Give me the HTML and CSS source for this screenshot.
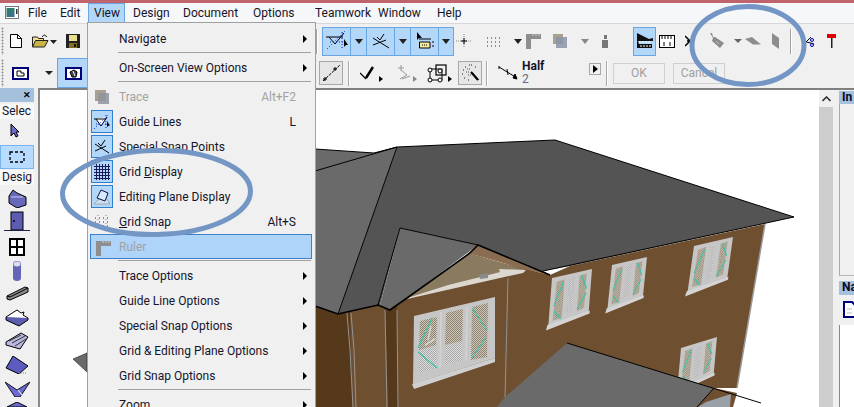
FILE: index.html
```html
<!DOCTYPE html>
<html lang="en">
<head>
<meta charset="utf-8">
<title>ArchiCAD View menu</title>
<link rel="stylesheet" href="styles.css">
</head>
<body>
<div class="app">
  <div class="titlebar"></div>
  <nav class="menubar">
    <svg class="appicon" width="15" height="14" viewBox="0 0 15 14"><rect x="0.5" y="0.5" width="13" height="12" fill="#fff" stroke="#777"/><rect x="1.5" y="2" width="8" height="9" fill="#2f7d6e"/><rect x="4" y="6" width="5" height="5" fill="#456a9c"/><rect x="11" y="3" width="1.5" height="5" fill="#333"/></svg>
    <span class="mi mi-file">File</span>
    <span class="mi mi-edit">Edit</span>
    <span class="mi mi-view">View</span>
    <span class="mi mi-design">Design</span>
    <span class="mi mi-doc">Document</span>
    <span class="mi mi-opt">Options</span>
    <span class="mi mi-team">Teamwork</span>
    <span class="mi mi-win">Window</span>
    <span class="mi mi-help">Help</span>
  </nav>

  <div class="toolbars">
    <div class="tbrow tbrow1">
      <div class="tbleft">
        <i class="grip"></i>
        <svg class="ic a-page" width="12" height="14" viewBox="0 0 12 14"><path d="M.5.5h7l4 4v9H.5z" fill="#fff" stroke="#000"/><path d="M7.5.5v4h4" fill="none" stroke="#000"/></svg>
        <svg class="ic a-open" width="17" height="14" viewBox="0 0 17 14"><path d="M.5 13V3h5l1 1.5h5V7" fill="#f4e08a" stroke="#222"/><path d="M.5 13 3.500 6.500H16L12.500 13z" fill="#c9b445" stroke="#222"/><path d="M10 3 12 .8l3 2" fill="none" stroke="#222"/></svg>
        <svg class="ic a-arrow1" width="7" height="4" viewBox="0 0 7 4"><path d="M0 0h7L3.500 4z" fill="#222"/></svg>
        <svg class="ic a-save" width="14" height="14" viewBox="0 0 14 14"><path d="M0 0h14v14H0z" fill="#222"/><path d="M3 1h8v6H3z" fill="#e8e090"/><path d="M3 9h8v5H3z" fill="#807020"/><path d="M8 10h2v3H8z" fill="#111"/></svg>
      </div>
      <i class="vsep"></i>
      <div class="bluegroup">
        <span class="bcell w28"><svg width="24" height="22" viewBox="0 0 24 22"><path d="M1 7h17M4 7l6 7 9-11" fill="none" stroke="#000"/><path d="M2 19 20 1M17 2v16M5 12h14" stroke="#0022cc" stroke-dasharray="1 2" fill="none"/><path d="M19 9v8l2-2 2 0z" fill="#000"/></svg></span>
        <span class="bcell w16"><i class="tri"></i></span>
        <span class="bcell w28"><svg width="18" height="16" viewBox="0 0 18 16"><path d="M1 5 17 15M1 12 14 7M5 4l3 3 4-6" fill="none" stroke="#000"/></svg></span>
        <span class="bcell w16"><i class="tri"></i></span>
        <span class="bcell w28"><svg width="18" height="18" viewBox="0 0 18 18"><path d="M1 0v8l2-2 3 0z" fill="#000"/><path d="M3.500 10H14v6H3.500z" fill="#f6e9a0" stroke="#000"/><path d="M6 13h6" stroke="#000" stroke-dasharray="1 1"/><path d="M3 7h12M16 10h2M16 14h2" stroke="#000"/></svg></span>
        <span class="bcell w15"><i class="tri"></i></span>
      </div>
      <svg class="ic a-guide" width="16" height="14" viewBox="0 0 16 14"><path d="M8 0v14M0 7h16" stroke="#888" stroke-dasharray="1 1"/><path d="M5 7h6M8 4v6" stroke="#000"/></svg>
      <svg class="ic a-grid" width="15" height="13" viewBox="0 0 15 13"><path d="M0 3h15M0 7h15M0 11h15" stroke="#0022aa" stroke-dasharray="1 3"/></svg>
      <svg class="ic a-arrow2" width="8" height="5" viewBox="0 0 8 5"><path d="M0 0h8L4 5z" fill="#222"/></svg>
      <svg class="ic a-ruler" width="15" height="15" viewBox="0 0 15 15"><path d="M0 0h15v5H5v10H0z" fill="#8e8e8e"/><path d="M7 0v2M10 0v2M13 0v2" stroke="#ccc"/></svg>
      <svg class="ic a-layers" width="14" height="14" viewBox="0 0 14 14"><rect x="0" y="0" width="10" height="10" fill="#a8a090"/><rect x="3" y="3" width="11" height="11" fill="#8a94a8" opacity=".85"/></svg>
      <svg class="ic a-arrow3" width="8" height="5" viewBox="0 0 8 5"><path d="M0 0h8L4 5z" fill="#888"/></svg>
      <svg class="ic a-fig" width="8" height="13" viewBox="0 0 8 13"><path d="M2 5h5v8H1V5zM3 0h3v4H3z" fill="#777"/></svg>
      <span class="bcell w23 a-sel"><svg width="20" height="20" viewBox="0 0 20 20"><path d="M2 2 14 8 18 7v3H3l1 3h13v4H2z" fill="#111"/><path d="M5 15h12M4 11h12" stroke="#fff" stroke-dasharray="2 1"/></svg></span>
      <svg class="ic a-rule2" width="16" height="13" viewBox="0 0 16 13"><rect x=".5" y=".5" width="15" height="12" fill="#fff" stroke="#000"/><path d="M3 1v3M6 1v3M9 1v3M12 1v3M5 7v4M11 7v4" stroke="#000"/></svg>
      <svg class="ic a-sc1" width="8" height="12" viewBox="0 0 8 12"><path d="M0 1 5 6 0 11M2 6h6" fill="none" stroke="#000" stroke-width="1.500"/></svg>
      <svg class="ic a-g1" width="16" height="16" viewBox="0 0 16 16"><path d="M1 0 3 0 4 4 6 4 15 10 11 15 3 8 4 5z" fill="#8b8b8b"/><path d="M7 8l3 3" stroke="#c4c4c4"/></svg>
      <svg class="ic a-arrow4" width="8" height="4" viewBox="0 0 8 4"><path d="M0 0h8L4 4z" fill="#666"/></svg>
      <svg class="ic a-g2" width="16" height="8" viewBox="0 0 16 8"><path d="M7 0 16 7.500H8L0 2z" fill="#8d8d8d"/></svg>
      <svg class="ic a-g3" width="8" height="16" viewBox="0 0 8 16"><path d="M0 0 7 5v11L0 11z" fill="#8d8d8d"/></svg>
      <i class="vsep a-sep2"></i>
      <svg class="ic a-sc2" width="13" height="14" viewBox="0 0 13 14"><path d="M0 2h3M0 4h3" stroke="#d00"/><path d="M1 7 12 10M1 11 9 3" stroke="#000"/><circle cx="10" cy="6" r="1.500" fill="none" stroke="#00a"/><circle cx="10" cy="11" r="1.500" fill="none" stroke="#00a"/></svg>
      <svg class="ic a-ham" width="9" height="14" viewBox="0 0 9 14"><path d="M0 0h9v4H0z" fill="#d00"/><path d="M4 4h1.500v10H4z" fill="#222"/></svg>
    </div>
    <div class="tbrow tbrow2">
      <div class="tbleft">
        <i class="grip"></i>
        <svg class="ic b-frame" width="17" height="13" viewBox="0 0 17 13"><rect x="1" y="1" width="15" height="11" fill="#fff" stroke="#00007a" stroke-width="2"/><path d="M5 4h4v2h3v3H5z" fill="none" stroke="#000"/></svg>
        <svg class="ic b-arrow" width="8" height="4" viewBox="0 0 8 4"><path d="M0 0h8L4 4z" fill="#222"/></svg>
        <span class="bcell b-sel"><svg width="17" height="13" viewBox="0 0 17 13"><rect x="1" y="1" width="15" height="11" fill="#fff" stroke="#00007a" stroke-width="2"/><path d="M5 5 9 3 12 5 11 10 7 10z" fill="#445" stroke="#000"/><path d="M8 4 10 9" stroke="#fff"/></svg></span>
      </div>
      <span class="pbtn c-line"><svg width="19" height="18" viewBox="0 0 19 18"><path d="M1 17 18 1" stroke="#000" stroke-dasharray="3 1"/><path d="M3 13v4M1 15h4M13 3v4M11 5h4" stroke="#000"/></svg></span>
      <i class="vsep2 c-s1"></i>
      <svg class="ic c-i1" width="14" height="14" viewBox="0 0 14 14"><path d="M0 7 6 13" stroke="#000" stroke-width="1.200"/><path d="M6 12 13 1" stroke="#000" stroke-width="2.500"/></svg>
      <svg class="ic c-t1" width="4" height="6" viewBox="0 0 4 6"><path d="M0 0 4 3 0 6z" fill="#000"/></svg>
      <svg class="ic c-i2" width="13" height="16" viewBox="0 0 13 16"><path d="M3 0v6M0 3h6M3 5l6 5-7 4M4 14l8-3" stroke="#999" fill="none"/></svg>
      <svg class="ic c-t2" width="4" height="6" viewBox="0 0 4 6"><path d="M0 0 4 3 0 6z" fill="#888"/></svg>
      <svg class="ic c-i3" width="20" height="19" viewBox="0 0 20 19"><rect x="3" y="5" width="12" height="11" fill="none" stroke="#000"/><rect x="9" y="1" width="10" height="10" fill="none" stroke="#000" stroke-width="1.200"/><circle cx="3" cy="6" r="2" fill="#fff" stroke="#000"/><circle cx="3" cy="16" r="2" fill="#fff" stroke="#000"/><circle cx="13" cy="16" r="2" fill="#fff" stroke="#000"/><circle cx="13" cy="7" r="2" fill="#fff" stroke="#000"/></svg>
      <svg class="ic c-t3" width="4" height="6" viewBox="0 0 4 6"><path d="M0 0 4 3 0 6z" fill="#000"/></svg>
      <span class="pbtn c-magic"><svg width="19" height="18" viewBox="0 0 19 18"><path d="M8 1h4M4 3h2M14 3h2M2 6h2M1 10h2M3 14h2M7 16h2M12 9l6 7" stroke="#222" stroke-dasharray="1 1" fill="none"/><path d="M10 8l7 8" stroke="#000" stroke-width="2"/><path d="M6 5h3M5 8h3M7 11h3" stroke="#555" stroke-dasharray="1 1"/></svg></span>
      <i class="vsep2 c-s2"></i>
      <svg class="ic c-i4" width="20" height="14" viewBox="0 0 20 14"><path d="M1 1 19 12" stroke="#000"/><path d="M1 0v3M9 3l1 6M17 8l2 5-4-1z" stroke="#000" fill="#000"/></svg>
      <div class="halfbox"><b class="half">Half</b><span class="two">2</span></div>
      <span class="playbtn"><svg width="5" height="8" viewBox="0 0 5 8"><path d="M0 0 5 4 0 8z" fill="#000"/></svg></span>
      <i class="vsep2 c-s3"></i>
      <span class="dbtn d-ok">OK</span>
      <span class="dbtn d-cancel">Cancel</span>
    </div>
  </div>

  <div class="main">
    <aside class="palette">
      <div class="palhead"><span class="palx">✕</span></div>
      <div class="paltab">Selec</div>
      <svg class="pal-arrow" width="10" height="15" viewBox="0 0 10 15"><path d="M1 1v12l3-3 2 4 2-1-2-4h3z" fill="#6a6ac8" stroke="#000"/></svg>
      <div class="pal-marquee"><svg width="16" height="12" viewBox="0 0 16 12"><rect x="1" y="1" width="14" height="10" fill="none" stroke="#000" stroke-width="1.300" stroke-dasharray="3 2"/></svg></div>
      <div class="paltab paltab2">Desig</div>
      <svg class="t-wall" width="19" height="19" viewBox="0 0 19 19"><path d="M1 7 5 1l4 3 9 4v8L9 19 1 14z" fill="#6868b8" stroke="#000"/><path d="M3 8h12" stroke="#c8c8f0"/></svg>
      <svg class="t-door" width="26" height="20" viewBox="0 0 26 20"><rect x="7" y="1" width="12" height="18" fill="#5c5cb0" stroke="#000"/><path d="M0 19.500h26" stroke="#224"/><circle cx="10" cy="10" r="1" fill="#000"/></svg>
      <svg class="t-win" width="16" height="18" viewBox="0 0 16 18"><rect x="1" y="1" width="14" height="16" fill="#fff" stroke="#000" stroke-width="2"/><path d="M8 1v16M1 9h14" stroke="#000" stroke-width="2"/></svg>
      <svg class="t-col" width="8" height="20" viewBox="0 0 8 20"><path d="M0 3a4 3 0 0 1 8 0v14a4 3 0 0 1-8 0z" fill="#6464b8"/><ellipse cx="4" cy="3" rx="3.500" ry="2.500" fill="#dde"/></svg>
      <svg class="t-beam" width="23" height="16" viewBox="0 0 23 16"><path d="M1 11 19 2l3 1v4L4 15l-3-1z" fill="#8a8a8a" stroke="#000"/><path d="M1 11l3 1L22 3" fill="none" stroke="#000"/></svg>
      <svg class="t-slab" width="24" height="18" viewBox="0 0 24 18"><path d="M1 8 12 1l4 3 3-1-1 3 5 3-9 7z" fill="#fff" stroke="#000"/><path d="M1 8v3l13 6 9-6V9" fill="#5c5cb0" stroke="#000"/></svg>
      <svg class="t-stair" width="24" height="18" viewBox="0 0 24 18"><path d="M1 10 16 1l7 4-8 12L1 13z" fill="#b8b8e0" stroke="#000"/><path d="M4 9l12-6M7 11l13-7M10 14l11-7" stroke="#333"/></svg>
      <svg class="t-roof" width="24" height="18" viewBox="0 0 24 18"><path d="M1 12 8 0l15 10-9 8z" fill="#5c5cc0" stroke="#000"/><path d="M14 17h8" stroke="#888" stroke-dasharray="1 1"/></svg>
      <svg class="t-shell" width="25" height="16" viewBox="0 0 25 16"><path d="M0 1 12 9 25 1 15 16H10z" fill="#6a6ad0" stroke="#112"/><path d="M13 9l4 5" stroke="#fff"/></svg>
      <svg class="t-next" width="20" height="5" viewBox="0 0 20 5"><path d="M0 5 10 0l10 5z" fill="#6a6ac8" stroke="#000"/></svg>
    </aside>
    <div class="cgap"></div>
    <div class="canvas">
      <svg class="house" width="779" height="317" viewBox="40 90 779 317">
        <defs>
          <pattern id="h1" width="2" height="2" patternUnits="userSpaceOnUse"><rect width="2" height="2" fill="#cfc8b8"/><rect width="1" height="1" fill="#8c8070"/><rect x="1" y="1" width="1" height="1" fill="#8c8070"/></pattern>
          <pattern id="h2" width="2" height="2" patternUnits="userSpaceOnUse"><rect width="2" height="2" fill="#dedede"/><rect width="1" height="1" fill="#a6a6a6"/><rect x="1" y="1" width="1" height="1" fill="#a6a6a6"/></pattern>
          <g id="win">
            <polygon points="0,0 40,0 40,42 0,46" fill="#c6c6c6"/>
            <polygon points="-1,45 41,40 41,43 -2,50" fill="#d4d4d4"/>
            <polygon points="5,5 13,4 13,41 4,42" fill="url(#h1)"/>
            <polygon points="17,5 23,4 23,38 17,38" fill="url(#h2)"/>
            <polygon points="28,4 35,3 35,36 28,38" fill="url(#h1)"/>
            <path d="M5 33 12 42M12 6 4 28M30 4l6 14M36 22 28 36" stroke="#3cc4a8" stroke-width="1.200" fill="none"/>
          </g>
        </defs>
        <polygon points="73,359 87,353 87,372" fill="#6a6a6a" stroke="#222" stroke-width=".6"/>
        <!-- walls -->
        <polygon points="315,306 338,314 378,305 397,305 470,255 550,275 570,266 765,224 737,388 714,388 697,407 315,407" fill="#6e4f30"/>
        <polygon points="315,306 338,314 350,312 352,407 315,407" fill="#56391a"/>
        <polygon points="385,307 397,305 398,407 388,407" fill="#56391a"/>
        <path d="M765 224 737 388" stroke="#9a9a9a" stroke-width="1.500"/>
        <path d="M347 313 350 350 353 407M351 313 354 350 356 407M385 310 387 407M397 310 398 407M508 278 505 397" stroke="#949494" fill="none"/>
        <!-- gable infill -->
        <polygon points="407,298 469,253 525,270 500,272 448,285" fill="#8a7a60"/>
        <polygon points="478,245 468,253 520,268 550,275" fill="#8a6c50"/>
        <polygon points="407,298 448,285 500,272 499,269 526,270 523,273 500,278 407,299" fill="#dcd8d0"/>
        <polygon points="479,275 488,273 488,278 480,279" fill="#8b8b8b"/>
        <!-- roofs -->
        <polygon points="315,149 374,153 397,147 338,314 315,306" fill="#6a6a6a"/>
        <polygon points="397,147 555,140 794,217 570,266 543,271 550,275 478,245 400,228 380,305 338,314" fill="#545454"/>
        <polygon points="400,228 478,245 407,298 390,310 380,305" fill="#6a6a6a"/>
        <path d="M315 149 374 153 397 147 555 140 794 217 543 271M315 171 397 147M397 147 338 314M400 228 478 245M400 228 378 305" fill="none" stroke="#000"/>
        <path d="M315 306 338 314 378 305 390 310 397 305 407 298 470 253 478 245 550 275" fill="none" stroke="#000" stroke-width="1.600"/>
        <!-- big window -->
        <polygon points="414,316 495,297 495,358 413,384" fill="#c6c6c6"/>
        <polygon points="412,384 495,358 495,362 414,389" fill="#d0d0d0"/>
        <polygon points="420,321 437,317 436,368 419,373" fill="url(#h2)"/>
        <polygon points="420,321 437,317 436,345 419,350" fill="url(#h1)"/>
        <polygon points="446,313 463,309 462,360 445,365" fill="url(#h2)"/>
        <polygon points="446,313 463,309 462,341 445,345" fill="url(#h1)"/>
        <polygon points="472,307 488,303 487,357 471,360" fill="url(#h1)"/>
        <path d="M441 312 440 368M467 307 466 360M428 340l3-14M425 345l10-6" stroke="#d4d4d4" stroke-width="1.500"/>
        <path d="M472 308 487 330M486 337 472 358M418 352 437 368M432 318 418 348" stroke="#3cc4a8" stroke-width="1.200" fill="none"/>
        <!-- small windows -->
        <use href="#win" transform="matrix(1 -.225 -.08 1.040 552 278)"/>
        <use href="#win" transform="matrix(.875 -.2 -.1 .96 612 265)"/>
        <use href="#win" transform="matrix(.975 -.225 -.14 1 694 246)"/>
        <use href="#win" transform="matrix(.9 -.275 -.08 .9 681 348)"/>
        <!-- lower roof -->
        <polygon points="505,397 567,343 714,388 697,407 497,407" fill="#6a6a6a"/>
        <polygon points="714,388 737,393 733,407 697,407" fill="#6e4f30"/>
        <polygon points="706,402 731,394 730,407 698,407" fill="#9aa0a8"/>
        <path d="M567 343 761 403M714 388 697 407" stroke="#000" fill="none"/>
      </svg>
    </div>
    <div class="scrollbar">
      <div class="scrollup"><svg width="9" height="6" viewBox="0 0 9 6"><path d="M.5 5 4.500 1l4 4" fill="none" stroke="#333" stroke-width="1.600"/></svg></div>
      <div class="scrollthumb"></div>
    </div>
    <aside class="rightpanel">
      <div class="rp-head">In</div>
      <div class="rp-box"></div>
      <div class="rp-head rp-head2">Na</div>
      <div class="rp-tool"><svg width="14" height="17" viewBox="0 0 14 17"><path d="M1 1h8l4 4v11H1z" fill="#fff" stroke="#00007a" stroke-width="2"/><path d="M4 8h5M4 12h5" stroke="#bbb"/></svg></div>
      <div class="rp-list"></div>
    </aside>
  </div>

  <div class="viewmenu">
    <div class="row row-first"><span class="lbl">Navigate</span><i class="sub"></i></div>
    <div class="sep"></div>
    <div class="row"><span class="lbl">On-Screen View Options</span><i class="sub"></i></div>
    <div class="sep"></div>
    <div class="row dis">
      <span class="mic"><svg width="16" height="16" viewBox="0 0 16 16"><rect x="1" y="1" width="11" height="11" fill="#a8a090"/><rect x="4" y="4" width="11" height="11" fill="#8f959f" opacity=".85"/></svg></span>
      <span class="lbl">Trace</span><span class="key">Alt+F2</span>
    </div>
    <div class="row">
      <span class="mic on"><svg width="18" height="16" viewBox="0 0 18 16"><path d="M1 5h12M3 5l5 7 6-9" fill="#fff" stroke="#000"/><path d="M1 15 15 1M13 1v14M3 10h12" stroke="#0022cc" stroke-dasharray="1 2" fill="none"/><path d="M14 7v6l2-1.500 1 0z" fill="#000"/></svg></span>
      <span class="lbl">Guide Lines</span><span class="key">L</span>
    </div>
    <div class="row">
      <span class="mic on"><svg width="16" height="16" viewBox="0 0 16 16"><path d="M1 5 15 14M1 12 12 7M4 4l3 3 4-6" fill="none" stroke="#000"/></svg></span>
      <span class="lbl">Special Snap Points</span>
    </div>
    <div class="row">
      <span class="mic on"><svg width="16" height="16" viewBox="0 0 16 16"><path d="M0 2.500h16M0 5.500h16M0 8.500h16M0 11.500h16M0 14.500h16M2.500 0v16M5.500 0v16M8.500 0v16M11.500 0v16M14.500 0v16" stroke="#1a1a5a"/></svg></span>
      <span class="lbl">Grid <u>D</u>isplay</span>
    </div>
    <div class="row">
      <span class="mic on"><svg width="18" height="16" viewBox="0 0 18 16"><path d="M1 15 6 10h8l3 5z" fill="#cfe0f0" stroke="#9ab"/><path d="M8 1 15 4 12 12 4 9z" fill="#d8ecff" stroke="#114"/></svg></span>
      <span class="lbl">Editing Plane Display</span>
    </div>
    <div class="row">
      <span class="mic"><svg width="14" height="14" viewBox="0 0 14 14"><path d="M0 3h14M0 7h14M0 11h14" stroke="#0022aa" stroke-dasharray="1 3"/><path d="M3 0v14M11 0v14" stroke="#888" stroke-dasharray="1 3"/></svg></span>
      <span class="lbl"><u>G</u>rid Snap</span><span class="key">Alt+S</span>
    </div>
    <div class="row dis hl">
      <span class="mic"><svg width="16" height="16" viewBox="0 0 16 16"><path d="M1 1h15v5H6v10H1z" fill="#8e8e8e"/><path d="M8 1v2M11 1v2M14 1v2" stroke="#ccc"/></svg></span>
      <span class="lbl">Ruler</span>
    </div>
    <div class="sep"></div>
    <div class="row"><span class="lbl">Trace Options</span><i class="sub"></i></div>
    <div class="row"><span class="lbl">Guide Line Options</span><i class="sub"></i></div>
    <div class="row"><span class="lbl">Special Snap Options</span><i class="sub"></i></div>
    <div class="row"><span class="lbl">Grid &amp; Editing Plane Options</span><i class="sub"></i></div>
    <div class="row"><span class="lbl">Grid Snap Options</span><i class="sub"></i></div>
    <div class="sep"></div>
    <div class="row"><span class="lbl">Zoom</span><i class="sub"></i></div>
  </div>

  <svg class="annot" width="854" height="407" viewBox="0 0 854 407">
    <ellipse cx="156.500" cy="192.500" rx="94" ry="42" transform="rotate(-1 156.500 192.500)"/>
    <ellipse cx="748" cy="45.500" rx="56" ry="39"/>
  </svg>
</div>
</body>
</html>
```

FILE: styles.css
```css
* { box-sizing: border-box; }
html, body { margin: 0; padding: 0; }
body { width: 854px; height: 407px; overflow: hidden; font-family: Roboto, "Noto Sans", sans-serif; font-size: 12px; color: #14142a; }
.app { position: relative; width: 854px; height: 407px; overflow: hidden; display: flex; flex-direction: column; background: #f0f0f0; }
svg { display: block; flex: none; }
i { display: block; flex: none; }

.titlebar { height: 3px; background: #bf636c; flex: none; }

.menubar { height: 20px; flex: none; background: #f6f7f8; display: flex; align-items: center; position: relative; }
.appicon { margin-left: 5px; }
.mi { line-height: 20px; height: 20px; flex: none; }
.mi-file { margin-left: 8px; width: 32px; }
.mi-edit { width: 34px; }
.mi-view { width: 37px; margin-left: -6px; padding-left: 6px; background: #b3d7f8; outline: 1px solid #6aa6e4; outline-offset: -1px; }
.mi-design { margin-left: 8px; width: 50px; }
.mi-doc { width: 70px; }
.mi-opt { width: 62px; }
.mi-team { width: 63px; }
.mi-win { width: 59px; }
.mi-help { width: 40px; }

.toolbars { flex: none; height: 65px; display: flex; flex-direction: column; border-top: 1px solid #d8d8d8; }
.tbrow { display: flex; align-items: center; flex: none; }
.tbrow1 { height: 34px; }
.tbrow2 { height: 30px; }
.tbleft { width: 316px; flex: none; height: 100%; display: flex; align-items: center; }
.grip { width: 3px; height: 28px; margin-left: 1px; background-image: radial-gradient(#9a9a9a 45%, transparent 50%); background-size: 3px 3px; }
.ic { display: block; }
.vsep { width: 2px; height: 25px; background: #a0a0a0; border-right: 1px solid #fff; }
.vsep2 { width: 2px; height: 25px; background: #a8a8a8; border-right: 1px solid #fff; }

.a-page { margin-left: 6px; }
.a-open { margin-left: 10px; }
.a-arrow1 { margin-left: 1px; margin-top: 1px; }
.a-save { margin-left: 9px; }

.bluegroup { display: flex; height: 29px; margin-left: 4px; flex: none; }
.bcell { display: flex; align-items: center; justify-content: center; height: 29px; flex: none; background: #b3d7f8; border: 1px solid #6aa6e4; margin-right: -1px; }
.w28 { width: 29px; }
.w16 { width: 17px; }
.w15 { width: 16px; }
.w23 { width: 23px; }
.tri { width: 0; height: 0; border-left: 4px solid transparent; border-right: 4px solid transparent; border-top: 5px solid #222; }

.a-guide { margin-left: 3px; }
.a-grid { margin-left: 15px; }
.a-arrow2 { margin-left: 12px; }
.a-ruler { margin-left: 4px; }
.a-layers { margin-left: 12px; }
.a-arrow3 { margin-left: 14px; }
.a-fig { margin-left: 12px; }
.a-sel { margin-left: 24px; margin-right: 0; }
.a-rule2 { margin-left: 3px; }
.a-sc1 { margin-left: 10px; }
.a-g1 { margin-left: 16px; }
.a-arrow4 { margin-left: 9px; }
.a-g2 { margin-left: 3px; }
.a-g3 { margin-left: 11px; }
.a-sep2 { margin-left: 10px; }
.a-sc2 { margin-left: 10px; }
.a-ham { margin-left: 12px; }

.b-frame { margin-left: 8px; }
.b-arrow { margin-left: 16px; }
.b-sel { width: 33px; height: 30px; margin-left: 4px; margin-right: 0; }

.pbtn { display: flex; align-items: center; justify-content: center; width: 24px; height: 24px; flex: none; border: 1px solid #a8a8a8; background: #e6e6e6; }
.c-line { margin-left: 3px; }
.c-s1 { margin-left: 5px; }
.c-i1 { margin-left: 10px; }
.c-t1 { margin-left: 5px; margin-top: 12px; }
.c-i2 { margin-left: 15px; }
.c-t2 { margin-left: 2px; margin-top: 12px; }
.c-i3 { margin-left: 10px; }
.c-t3 { margin-left: 1px; margin-top: 12px; }
.c-magic { margin-left: 6px; }
.c-s2 { margin-left: 4px; }
.c-i4 { margin-left: 10px; }
.halfbox { display: flex; flex-direction: column; margin-left: 4px; width: 67px; font-size: 12px; line-height: 13px; flex: none; }
.half { color: #14142a; font-weight: 700; }
.two { color: #5a6a8a; }
.playbtn { display: flex; align-items: center; justify-content: center; width: 12px; height: 12px; flex: none; margin-top: -8px; border: 1px solid #a8a8a8; background: #f0f0f0; }
.c-s3 { margin-left: 5px; }
.dbtn { display: flex; align-items: center; justify-content: center; width: 52px; height: 21px; flex: none; border: 1px solid #d0d0d0; color: #a0a0a0; }
.d-ok { margin-left: 5px; }
.d-cancel { margin-left: 8px; }

.main { flex: 1; min-height: 0; display: flex; }
.palette { width: 34px; flex: none; display: flex; flex-direction: column; align-items: center; background: #f0f0f0; }
.palhead { width: 34px; height: 14px; flex: none; background: #a5c0dc; display: flex; align-items: center; justify-content: flex-end; padding-right: 3px; }
.palx { font-size: 9px; font-weight: 700; color: #000; line-height: 14px; }
.paltab { width: 34px; height: 15px; margin-top: 2px; flex: none; background: #f8f8f8; font-size: 12px; line-height: 15px; padding-left: 2px; overflow: hidden; white-space: nowrap; }
.pal-arrow { margin-top: 4px; margin-right: 4px; }
.pal-marquee { width: 34px; height: 24px; margin-top: 7px; flex: none; background: #b8dcff; border: 1px solid #7ab4ec; display: flex; align-items: center; justify-content: center; }
.paltab2 { margin-top: 1px; }
.t-wall { margin-top: 4px; }
.t-door { margin-top: 3px; }
.t-win { margin-top: 7px; }
.t-col { margin-top: 5px; }
.t-beam { margin-top: 4px; }
.t-slab { margin-top: 8px; }
.t-stair { margin-top: 5px; }
.t-roof { margin-top: 6px; }
.t-shell { margin-top: 7px; }
.t-next { margin-top: 5px; }

.cgap { width: 4px; flex: none; }
.canvas { width: 781px; flex: none; background: #fff; border-left: 2px solid #8a8a8a; border-top: 2px solid #808080; overflow: hidden; }
.house { display: block; }
.scrollbar { width: 14px; flex: none; display: flex; flex-direction: column; border-top: 2px solid #808080; background: #f0f0f0; }
.scrollup { height: 17px; flex: none; display: flex; align-items: center; justify-content: center; }
.scrollthumb { flex: 1; background: #cdcdcd; }
.rightpanel { flex: 1; display: flex; flex-direction: column; background: #f0f0f0; padding-left: 6px; border-top: 2px solid #808080; overflow: hidden; }
.rp-head { height: 13px; margin-top: 1px; flex: none; background: #a5c0dc; font-weight: 700; font-size: 12px; line-height: 13px; padding-left: 3px; color: #0a0a20; white-space: nowrap; }
.rp-box { height: 172px; flex: none; border-left: 1px solid #a8a8a8; border-bottom: 1px solid #b8b8b8; background: #f0f0f0; }
.rp-head2 { margin-top: 5px; height: 14px; }
.rp-tool { height: 30px; flex: none; padding: 6px 0 0 4px; }
.rp-list { flex: 1; background: #fff; border-left: 1px solid #888; }

.viewmenu { position: absolute; left: 87px; top: 22px; width: 229px; height: 385px; background: #f0f0f0; border: 1px solid #a0a0a0; border-bottom: 0; padding: 0 3px 0 2px; display: flex; flex-direction: column; overflow: hidden; }
.row { height: 25px; flex: none; display: flex; align-items: center; position: relative; padding-left: 29px; white-space: nowrap; }
.row-first { margin-top: 3px; }
.row.dis { color: #a2a2a2; }
.row.hl { background: #aed4fa; border: 1px solid #3c80c8; margin-bottom: 0; padding-left: 28px; }
.lbl { flex: 1; }
.key { margin-right: 16px; }
.sub { width: 0; height: 0; border-top: 4px solid transparent; border-bottom: 4px solid transparent; border-left: 4px solid #000; margin-right: 5px; }
.sep { height: 1px; flex: none; margin: 1px 1px 2px 28px; background: #a0a0a0; }
.mic { position: absolute; left: 1px; top: 1px; width: 22px; height: 23px; display: flex; align-items: center; justify-content: center; }
.mic.on { background: #b3d7f8; border: 1px solid #2f7fd0; }

.annot { position: absolute; left: 0; top: 0; pointer-events: none; }
.annot ellipse { fill: none; stroke: #7396c4; stroke-width: 5; }
```
